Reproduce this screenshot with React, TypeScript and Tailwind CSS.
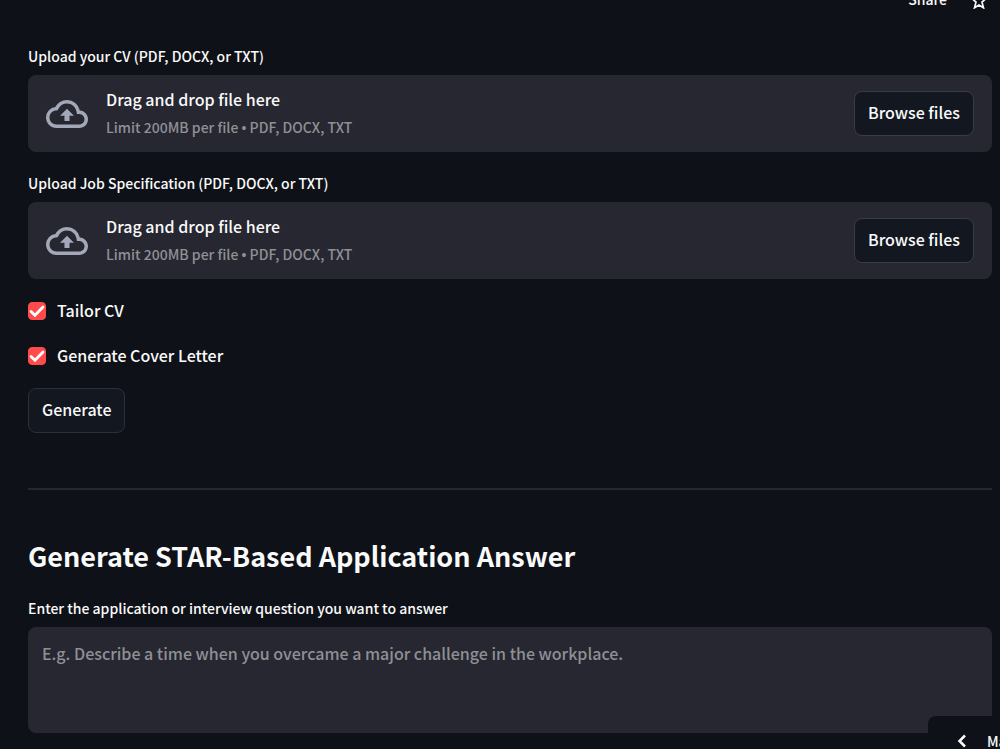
import { useState } from 'react';

function CloudUploadIcon() {
  return (
    <svg viewBox="0 0 24 24" fill="currentColor" aria-hidden="true" className="size-[42px] shrink-0 text-[#a3a8b8]">
      <path d="M19.35 10.04A7.49 7.49 0 0 0 12 4C9.11 4 6.6 5.64 5.35 8.04A5.994 5.994 0 0 0 0 14c0 3.31 2.69 6 6 6h13c2.76 0 5-2.24 5-5 0-2.64-2.05-4.78-4.65-4.96zM19 18H6c-2.21 0-4-1.79-4-4 0-2.05 1.53-3.76 3.56-3.97l1.07-.11.5-.95A5.469 5.469 0 0 1 12 6c2.62 0 4.88 1.86 5.39 4.43l.3 1.5 1.53.11A2.98 2.98 0 0 1 22 15c0 1.65-1.35 3-3 3zM8 13h2.55v3h2.9v-3H16l-4-4z" />
    </svg>
  );
}

function FileUploader({ id, label }: { id: string; label: string }) {
  return (
    <div>
      <label htmlFor={id} className="block pb-[7px] text-sm leading-6">
        {label}
      </label>
      <section className="flex min-h-[77px] items-center rounded-lg bg-[#262730] px-[18px] py-2">
        <CloudUploadIcon />
        <div className="ml-[18px] flex flex-1 flex-col">
          <span className="text-base leading-7">Drag and drop file here</span>
          <span className="text-sm leading-7 text-[#8f9096]">
            Limit 200MB per file <span className="font-['Liberation_Sans',sans-serif]">•</span> PDF, DOCX, TXT
          </span>
        </div>
        <button
          id={id}
          type="button"
          className="h-[45px] rounded-lg border border-[#3a3c45] bg-[#131720] px-[13px] pb-1 text-base leading-7"
        >
          Browse files
        </button>
      </section>
    </div>
  );
}

function Checkbox({ label }: { label: string }) {
  const [checked, setChecked] = useState(true);
  return (
    <label className="flex items-center gap-[11px] text-base leading-7">
      <span className="grid size-[18px] place-items-center">
        <input
          type="checkbox"
          checked={checked}
          onChange={(e) => setChecked(e.target.checked)}
          className="peer col-start-1 row-start-1 size-[18px] appearance-none rounded border border-[#464852] checked:border-[#ff4b4b] checked:bg-[#ff4b4b]"
        />
        <svg
          viewBox="0 0 18 18"
          fill="none"
          aria-hidden="true"
          className="pointer-events-none invisible col-start-1 row-start-1 size-[18px] peer-checked:visible"
        >
          <path d="M3 9.400l4 3.900L15 5" stroke="#fff" strokeWidth="2.800" strokeLinecap="round" />
        </svg>
      </span>
      <span className="pb-[2px]">{label}</span>
    </label>
  );
}

export default function App() {
  return (
    <div className="min-h-screen overflow-hidden bg-[#0e1117] font-['Noto_Sans_CJK_SC',sans-serif] font-medium text-[#fafafa]">
      <header className="flex h-[10px] items-end justify-end gap-6 overflow-hidden pr-[13px]">
        <button type="button" className="pb-px text-sm leading-5">
          Share
        </button>
        <button type="button" aria-label="Favorite" className="pb-px">
          <svg viewBox="0 0 16 16" fill="none" stroke="currentColor" strokeWidth="1.7" className="size-4">
            <path d="M8 1l1.900 4.500 4.700.4-3.600 3.200 1.500 5.700L8 12.100l-4.500 2.700L5 9.100 1.400 5.900l4.700-.4z" />
          </svg>
        </button>
      </header>

      <main className="pt-[34px] pr-2 pb-4 pl-7">
        <div className="flex flex-col gap-[19px]">
          <FileUploader id="cv-file" label="Upload your CV (PDF, DOCX, or TXT)" />
          <FileUploader id="job-file" label="Upload Job Specification (PDF, DOCX, or TXT)" />
        </div>

        <div className="flex flex-col items-start gap-[17px] pt-[17px]">
          <div className="flex flex-col gap-[15px]">
            <Checkbox label="Tailor CV" />
            <Checkbox label="Generate Cover Letter" />
          </div>
          <button
            type="button"
            className="h-[45px] rounded-lg border border-[#2d3038] bg-[#131720] px-[13px] pb-1 text-base leading-7"
          >
            Generate
          </button>
        </div>

        <hr className="mt-[55px] border-t-2 border-[#262830]" />

        <h2 className="pt-[44px] text-[27px] leading-[44px] font-bold">Generate STAR-Based Application Answer</h2>

        <div className="pt-[18px]">
          <label htmlFor="question" className="block pb-[7px] text-sm leading-6">
            Enter the application or interview question you want to answer
          </label>
          <textarea
            id="question"
            placeholder="E.g. Describe a time when you overcame a major challenge in the workplace."
            className="block h-[106px] w-full resize-none rounded-lg bg-[#262730] px-[14px] py-3 text-base leading-7 outline-none placeholder:text-[#8f9096]"
          />
        </div>
      </main>

      <button
        type="button"
        className="fixed right-0 bottom-0 flex h-[33px] w-[72px] items-center gap-4 overflow-hidden rounded-tl-lg bg-[#0e1117] pt-4 pl-[27px] text-sm leading-4 whitespace-nowrap"
      >
        <svg viewBox="0 0 16 16" fill="none" stroke="currentColor" strokeWidth="2.500" className="size-4 shrink-0" aria-hidden="true">
          <path d="M10 2.500L4.500 8l5.500 5.500" />
        </svg>
        <span>Manage app</span>
      </button>
    </div>
  );
}
